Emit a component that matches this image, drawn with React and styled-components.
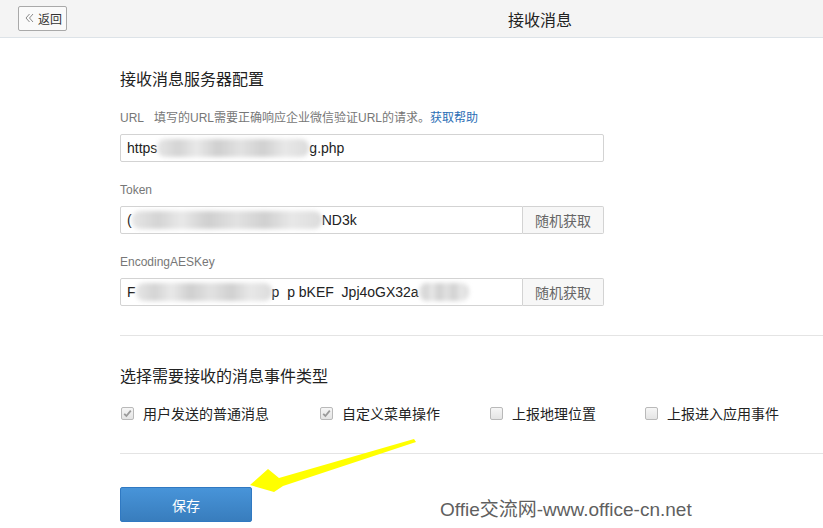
import React from "react";
import styled, { createGlobalStyle } from "styled-components";

const GlobalStyle = createGlobalStyle`
  body {
    margin: 0;
    background: #fff;
    font-family: "Liberation Sans", Arial, "Noto Sans CJK SC", sans-serif;
    color: #222;
  }
`;

const Page = styled.div`
  position: relative;
  width: 823px;
  height: 528px;
  overflow: hidden;
`;

const Header = styled.div`
  height: 37px;
  background: #f4f4f4;
  border-bottom: 1px solid #dde3e8;
  display: flex;
  align-items: center;
  padding-left: 18px;
`;

const BackButton = styled.button`
  width: 49px;
  height: 25px;
  margin-top: -1px;
  padding: 0 0 0 6px;
  border: 1px solid #a9a9a9;
  border-radius: 2px;
  background: #fafafa;
  display: flex;
  align-items: center;
  gap: 4px;
  font-family: inherit;
  font-size: 12px;
  color: #333;
`;

const HeaderTitle = styled.div`
  margin-left: 441px;
  font-size: 16px;
  color: #222;
`;

const Content = styled.div`
  padding: 32px 0 0 120px;
`;

const SectionTitle = styled.div`
  margin-top: ${(p) => p.$top || 0}px;
  font-size: 16px;
  line-height: 20px;
  color: #222;
`;

const Label = styled.div`
  margin-top: ${(p) => p.$top || 20}px;
  font-size: 12px;
  line-height: 16px;
  color: #777;
`;

const HelpLink = styled.a`
  color: #2a6eb5;
  text-decoration: none;
`;

const InputRow = styled.div`
  margin-top: 8px;
  width: 484px;
  height: 28px;
  display: flex;
`;

const Input = styled.div`
  flex: 1;
  border: 1px solid #d3d3d3;
  border-radius: ${(p) => (p.$joined ? "2px 0 0 2px" : "2px")};
  background: #fff;
  display: flex;
  align-items: center;
  padding-left: 6px;
  font-size: 14px;
  color: #222;
  white-space: nowrap;
  overflow: hidden;
`;

const Mosaic = styled.span`
  display: inline-block;
  width: ${(p) => p.$w}px;
  height: 18px;
  background: linear-gradient(
    90deg,
    #e6e6e6 0%,
    #d4d4d4 14%,
    #e9e9e9 26%,
    #cfcfcf 40%,
    #e2e2e2 55%,
    #d0d0d0 70%,
    #e8e8e8 84%,
    #dcdcdc 100%
  );
  filter: blur(2px);
  border-radius: 8px;
`;

const SideButton = styled.button`
  width: 81px;
  border: 1px solid #d3d3d3;
  border-left: none;
  border-radius: 0 2px 2px 0;
  background: #f7f7f7;
  font-family: inherit;
  font-size: 14px;
  color: #666;
`;

const Divider = styled.div`
  margin-top: ${(p) => p.$top}px;
  height: 1px;
  background: #e4e4e4;
`;

const CheckRow = styled.div`
  margin-top: 16px;
  display: flex;
  align-items: center;
  height: 20px;
`;

const CheckItem = styled.label`
  width: ${(p) => p.$w}px;
  display: flex;
  align-items: center;
  font-size: 14px;
  color: #222;
`;

const Box = styled.span`
  width: 11px;
  height: 11px;
  margin: 0 9px 0 1px;
  border: 1px solid #b9b9b9;
  border-radius: 2px;
  background: linear-gradient(#f6f6f6, #e4e4e4);
  display: flex;
  align-items: center;
  justify-content: center;
`;

const ButtonRow = styled.div`
  margin-top: 33px;
  display: flex;
  align-items: center;
`;

const SaveButton = styled.button`
  width: 132px;
  height: 35px;
  border: 1px solid #3079c2;
  border-radius: 2px;
  background: linear-gradient(#4894d9, #387dbd);
  color: #fff;
  font-family: inherit;
  font-size: 14px;
`;

const Watermark = styled.div`
  margin: 6px 0 0 188px;
  font-size: 19px;
  color: #5f5f5f;
`;

const Arrow = styled.svg`
  position: absolute;
  left: 0;
  top: 0;
  pointer-events: none;
`;

const Check = ({ checked, label, w }) => (
  <CheckItem $w={w}>
    <Box>
      {checked && (
        <svg width="9" height="9" viewBox="0 0 9 9">
          <path d="M1.2 4.8 L3.4 7 L7.8 1.6" fill="none" stroke="#9a9a9a" strokeWidth="1.8" />
        </svg>
      )}
    </Box>
    {label}
  </CheckItem>
);

export default function App() {
  return (
    <Page>
      <GlobalStyle />
      <Header>
        <BackButton>
          <svg width="9" height="10" viewBox="0 0 9 10">
            <path d="M4.5 1 L1 5 L4.5 9 M8 1 L4.5 5 L8 9" fill="none" stroke="#8a8a8a" strokeWidth="1" />
          </svg>
          返回
        </BackButton>
        <HeaderTitle>接收消息</HeaderTitle>
      </Header>
      <Content>
        <SectionTitle>接收消息服务器配置</SectionTitle>
        <Label>
          URL&nbsp;&nbsp;&nbsp;填写的URL需要正确响应企业微信验证URL的请求。
          <HelpLink href="#">获取帮助</HelpLink>
        </Label>
        <InputRow>
          <Input>
            https<Mosaic $w={152} />g.php
          </Input>
        </InputRow>

        <Label>Token</Label>
        <InputRow>
          <Input $joined>
            (<Mosaic $w={190} />ND3k
          </Input>
          <SideButton>随机获取</SideButton>
        </InputRow>

        <Label>EncodingAESKey</Label>
        <InputRow>
          <Input $joined>
            F<Mosaic $w={136} />p&nbsp;&nbsp;p&nbsp;bKEF&nbsp;&nbsp;Jpj4oGX32a<Mosaic $w={50} />
          </Input>
          <SideButton>随机获取</SideButton>
        </InputRow>

        <Divider $top={29} />

        <SectionTitle $top={31}>选择需要接收的消息事件类型</SectionTitle>
        <CheckRow>
          <Check checked label="用户发送的普通消息" w={199} />
          <Check checked label="自定义菜单操作" w={170} />
          <Check label="上报地理位置" w={155} />
          <Check label="上报进入应用事件" w={160} />
        </CheckRow>

        <Divider $top={30} />

        <ButtonRow>
          <SaveButton>保存</SaveButton>
          <Watermark>Offie交流网-www.office-cn.net</Watermark>
        </ButtonRow>
      </Content>
      <Arrow width="823" height="528" viewBox="0 0 823 528">
        <polygon
          points="414,439 279,478 268,469 250,485 274,492 283,486 416,442"
          fill="#ffff00"
        />
      </Arrow>
    </Page>
  );
}
